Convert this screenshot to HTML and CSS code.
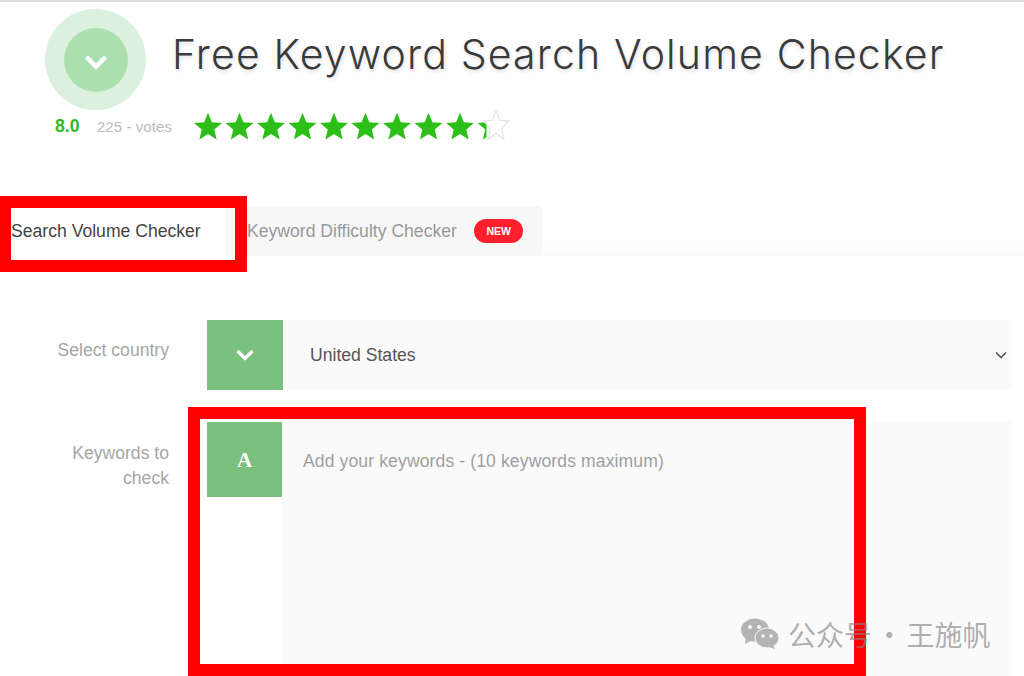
FILE: index.html
```html
<!DOCTYPE html>
<html>
  <head>
    <meta http-equiv="Content-Type" content="text/html; charset=utf-8" />
    <title>Free Keyword Search Volume Checker</title>
    <link rel="stylesheet" href="styles.css">
  </head>
  <body>
    <div class="head">
      <div class="head-left">
        <div class="logo">
          <div class="logo-inner">
            <svg class="logo-check" width="24" height="18" viewBox="0 0 24 18"><path d="M2.500 4l9.500 9.500L21.500 4" fill="none" stroke="#fff" stroke-width="4.500"/></svg>
          </div>
        </div>
        <div class="rating">
          <span class="score">8.0</span>
          <span class="votes">225 - votes</span>
        </div>
      </div>
      <div class="head-right">
        <h1>Free Keyword Search Volume Checker</h1>
        <svg class="stars" width="320" height="34" viewBox="0 0 320 34">
          <defs>
            <path id="star" d="M14 .8l3.880 9.360 10.100.8-7.700 6.580 2.360 9.850L14 22.100l-8.640 5.290 2.360-9.850L.02 10.960l10.100-.8z"/>
            <clipPath id="half"><rect x="0" y="0" width="9" height="32"/></clipPath>
          </defs>
          <use href="#star" x="0" y="2" fill="#2cbf18"/>
          <use href="#star" x="31.500" y="2" fill="#2cbf18"/>
          <use href="#star" x="63" y="2" fill="#2cbf18"/>
          <use href="#star" x="94.500" y="2" fill="#2cbf18"/>
          <use href="#star" x="126" y="2" fill="#2cbf18"/>
          <use href="#star" x="157.500" y="2" fill="#2cbf18"/>
          <use href="#star" x="189" y="2" fill="#2cbf18"/>
          <use href="#star" x="220.500" y="2" fill="#2cbf18"/>
          <use href="#star" x="252" y="2" fill="#2cbf18"/>
          <g transform="translate(283.500 2)" clip-path="url(#half)">
            <use href="#star" fill="#2cbf18"/>
          </g>
          <g transform="translate(289.500 -1) scale(.9 1.1)">
            <use href="#star" fill="none" stroke="#e4e4e4" stroke-width="1.300"/>
          </g>
        </svg>
      </div>
    </div>

    <div class="tabs">
      <div class="tab active">Search Volume Checker</div>
      <div class="tab">Keyword Difficulty Checker <span class="badge">NEW</span></div>
    </div>

    <div class="form">
      <div class="row">
        <label class="row-label">Select country</label>
        <div class="field field-select">
          <div class="addon">
            <svg width="20" height="14" viewBox="0 0 20 14"><path d="M2.500 3L10 10.500 17.500 3" fill="none" stroke="#fff" stroke-width="3.200"/></svg>
          </div>
          <div class="value">United States</div>
          <svg class="caret" width="12" height="8" viewBox="0 0 12 8"><path d="M1 1.500l5 5 5-5" fill="none" stroke="#555" stroke-width="1.600"/></svg>
        </div>
      </div>
      <div class="row">
        <label class="row-label">Keywords to check</label>
        <div class="field field-text">
          <div class="addon addon-text">A</div>
          <div class="placeholder">Add your keywords - (10 keywords maximum)</div>
        </div>
      </div>
    </div>

    <div class="mark mark-tab"></div>
    <div class="mark mark-input"></div>

    <div class="watermark">
      <svg width="40" height="32" viewBox="0 0 40 32">
        <ellipse cx="15" cy="12" rx="14" ry="11.500" fill="#b4b4b4"/>
        <path d="M6 19l-1 7 7-4z" fill="#b4b4b4"/>
        <ellipse cx="27" cy="20" rx="12" ry="10" fill="#b4b4b4" stroke="#fafafa" stroke-width="1"/>
        <path d="M33 27l2 4-6-2z" fill="#b4b4b4"/>
        <circle cx="10" cy="9" r="2" fill="#fafafa"/>
        <circle cx="19" cy="9" r="2" fill="#fafafa"/>
        <circle cx="23" cy="18" r="1.700" fill="#fafafa"/>
        <circle cx="31" cy="18" r="1.700" fill="#fafafa"/>
      </svg>
      <span class="watermark-text">公众号 · 王施帆</span>
    </div>
  </body>
</html>
```

FILE: styles.css
```css
html, body {
  height: 100%;
}
body {
  margin: 0;
  overflow: hidden;
  position: relative;
  background: #fff;
  border-top: 2px solid #dcdcdc;
  box-sizing: border-box;
  font-family: "Liberation Sans", Arial, sans-serif;
  font-size: 17.6px;
  color: #444;
}
.head {
  display: flex;
  height: 204px;
}
.head-left {
  width: 172px;
  flex: none;
}
.logo {
  width: 101px;
  height: 101px;
  margin: 7px 0 0 45px;
  border-radius: 50%;
  background: #dcf0de;
  display: flex;
  align-items: center;
  justify-content: center;
}
.logo-inner {
  width: 64px;
  height: 64px;
  border-radius: 50%;
  background: #abdfb0;
  display: flex;
  align-items: center;
  justify-content: center;
}
.logo-check {
  margin-top: 5px;
}
.rating {
  display: flex;
  align-items: baseline;
  margin: 6px 0 0 55px;
}
.score {
  color: #35b81f;
  font-weight: bold;
  width: 42px;
}
.votes {
  color: #bbb;
  font-size: 15.200px;
  white-space: nowrap;
}
h1 {
  margin: 27px 0 0;
  font-family: Inter, sans-serif;
  font-size: 41px;
  line-height: 50px;
  font-weight: 300;
  letter-spacing: 1.150px;
  color: #3a3a3a;
  text-shadow: 1px 2px 4px rgba(0, 0, 0, 0.15);
  white-space: nowrap;
}
.stars {
  display: block;
  margin: 31px 0 0 22px;
}
.tabs {
  display: flex;
  height: 50px;
  background: linear-gradient(#fff 70%, #fafafa);
}
.tab {
  display: flex;
  align-items: center;
  color: #999;
  background: #f7f7f7;
  border-radius: 0 4px 0 0;
  padding: 0 19px 0 21px;
  gap: 17px;
}
.tab.active {
  width: 215px;
  padding: 0 0 0 11px;
  color: #444;
  background: #fff;
}
.badge {
  background: #ff1f2d;
  color: #fff;
  font-size: 10.500px;
  font-weight: bold;
  padding: 0 12.500px;
  line-height: 24px;
  border-radius: 12px;
}
.form {
  padding: 64px 12px 0 0;
}
.row {
  display: flex;
  margin-bottom: 32px;
}
.row:last-child {
  margin-bottom: 0;
}
.row-label {
  width: 114px;
  margin: 0 38px 0 55px;
  flex: none;
  text-align: right;
  color: #a5a5a5;
  line-height: 25px;
}
.row:first-child .row-label {
  padding-top: 18px;
}
.row:last-child .row-label {
  padding-top: 19px;
}
.field {
  flex: 1;
  display: flex;
  position: relative;
}
.field-select {
  height: 70px;
  align-items: center;
  background: #fafafa;
}
.field-text {
  height: 254px;
}
.addon {
  width: 76px;
  height: 70px;
  flex: none;
  background: #7ac17f;
  display: flex;
  align-items: center;
  justify-content: center;
}
.addon-text {
  width: 75px;
  height: 73px;
  padding-top: 2px;
  color: #fff;
  font-family: "Liberation Serif", serif;
  font-size: 21px;
  font-weight: bold;
}
.value {
  margin-left: 27px;
  color: #555;
}
.caret {
  position: absolute;
  right: 5px;
  top: 31px;
}
.placeholder {
  flex: 1;
  padding: 29px 0 0 21px;
  background: #fafafa;
  color: #a0a0a0;
  letter-spacing: 0.1px;
}
.mark {
  position: absolute;
  border: 12px solid #ff0000;
  box-sizing: border-box;
}
.mark-tab {
  left: -1px;
  top: 194px;
  width: 248px;
  height: 76px;
}
.mark-input {
  left: 188px;
  top: 405px;
  width: 678px;
  height: 269px;
}
.watermark {
  position: absolute;
  left: 740px;
  top: 616px;
  display: flex;
  align-items: center;
  gap: 8px;
  color: rgba(130, 130, 130, 0.65);
  font-family: "Noto Sans CJK SC", sans-serif;
  font-size: 28px;
  white-space: nowrap;
}
.watermark-text {
  line-height: 32px;
  word-spacing: -3px;
}
```
